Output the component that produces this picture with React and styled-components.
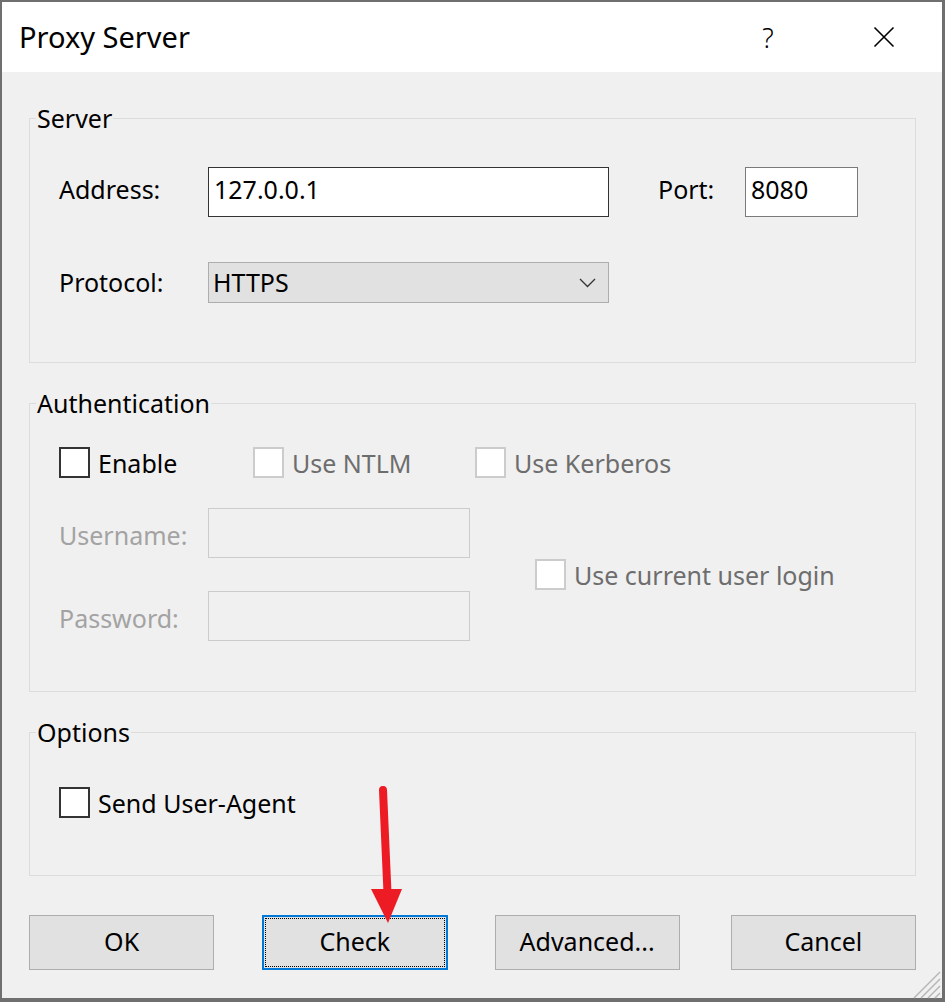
import React from "react";
import styled, { createGlobalStyle } from "styled-components";

const Global = createGlobalStyle`
  html, body { margin: 0; padding: 0; background: #6f6f6f; }
  body { font-family: "Noto Sans", "Open Sans", sans-serif; }
  * { box-sizing: border-box; }
`;

const Page = styled.div`
  position: relative;
  width: 945px;
  height: 1002px;
`;

const Window = styled.div`
  width: 945px;
  height: 1002px;
  border-style: solid;
  border-color: #6f6f6f;
  border-width: 2px 3px 4px 2px;
  background: #f0f0f0;
  display: flex;
  flex-direction: column;
  color: #000;
  font-size: 25px;
`;

const TitleBar = styled.div`
  height: 70px;
  background: #ffffff;
  display: flex;
  align-items: center;
  padding-left: 17px;
  flex-shrink: 0;
`;

const Title = styled.div`
  font-size: 29px;
  line-height: 1;
  padding-bottom: 2px;
  flex: 1;
`;

const TitleButton = styled.div`
  width: 116px;
  height: 70px;
  display: flex;
  align-items: center;
  justify-content: center;
  font-size: 27px;
  font-weight: 300;
`;

const Body = styled.div`
  padding: 33px 26px 0 27px;
  display: flex;
  flex-direction: column;
`;

const Group = styled.fieldset`
  margin: ${(p) => (p.$first ? "0" : "27px 0 0 0")};
  padding: 0;
  border: 1px solid #dcdcdc;
  min-width: 0;
`;

const Legend = styled.legend`
  margin-left: 6px;
  padding: 0 1px;
  font-size: 25px;
  line-height: 26px;
  color: #000;
`;

const GroupContent = styled.div`
  padding: ${(p) => p.$pad};
  display: flex;
  flex-direction: column;
`;

const Row = styled.div`
  display: flex;
  align-items: center;
  margin-top: ${(p) => p.$mt || 0}px;
`;

const Label = styled.div`
  width: ${(p) => p.$w}px;
  margin-left: ${(p) => p.$ml || 0}px;
  color: ${(p) => (p.$disabled ? "#a3a3a3" : "#000")};
  padding-bottom: ${(p) => (p.$raised ? 6 : 0)}px;
  padding-top: ${(p) => (p.$disabled ? 4 : 0)}px;
  line-height: 1;
  flex-shrink: 0;
`;

const TextBox = styled.div`
  width: ${(p) => p.$w}px;
  height: 50px;
  border: 1px solid ${(p) => p.$border || "#7a7a7a"};
  background: ${(p) => (p.$disabled ? "#f0f0f0" : "#ffffff")};
  padding: 0 5px 6px;
  display: flex;
  align-items: center;
  line-height: 1;
  flex-shrink: 0;
`;

const Select = styled.div`
  width: 401px;
  height: 41px;
  border: 1px solid #adadad;
  background: #e1e1e1;
  display: flex;
  align-items: center;
  padding: 0 12px 0 4px;
  justify-content: space-between;
  line-height: 1;
`;

const CheckItem = styled.label`
  display: flex;
  align-items: center;
  width: ${(p) => (p.$w ? `${p.$w}px` : "auto")};
  color: ${(p) => (p.$disabled ? "#6d6d6d" : "#000")};
  line-height: 1;
  flex-shrink: 0;
`;

const Box = styled.span`
  width: 31px;
  height: 31px;
  background: #fff;
  border: 2px solid ${(p) => (p.$disabled ? "#cccccc" : "#333333")};
  margin-right: 8px;
  flex-shrink: 0;
`;

const CheckText = styled.span`
  padding-top: 1px;
`;

const AuthGrid = styled.div`
  display: flex;
  align-items: center;
  margin-top: 30px;
`;

const FieldColumn = styled.div`
  display: flex;
  flex-direction: column;
  gap: 33px;
`;

const RightColumn = styled.div`
  margin-left: 65px;
`;

const ButtonRow = styled.div`
  display: flex;
  gap: 48px;
  margin-top: 39px;
`;

const Button = styled.button`
  width: 186px;
  height: 55px;
  font-family: inherit;
  font-size: 25px;
  color: #000;
  background: #e1e1e1;
  border: ${(p) => (p.$focused ? "2px solid #0078d7" : "1px solid #adadad")};
  outline: ${(p) => (p.$focused ? "1px dotted #000" : "none")};
  outline-offset: -4px;
  padding: 0 0 3px;
  margin: 0 0 0 ${(p) => p.$shift || 0}px;
  line-height: 1;
`;

const Overlay = styled.svg`
  position: absolute;
  left: 0;
  top: 0;
  pointer-events: none;
`;

function Checkbox({ label, disabled, w }) {
  return (
    <CheckItem $disabled={disabled} $w={w}>
      <Box $disabled={disabled} />
      <CheckText>{label}</CheckText>
    </CheckItem>
  );
}

export default function App() {
  return (
    <Page>
      <Global />
      <Window>
        <TitleBar>
          <Title>Proxy Server</Title>
          <TitleButton>?</TitleButton>
          <TitleButton>
            <svg width="22" height="22" viewBox="0 0 22 22">
              <path d="M1.5 1.5 L20.5 20.5 M20.5 1.5 L1.5 20.5" stroke="#000" strokeWidth="1.6" fill="none" />
            </svg>
          </TitleButton>
        </TitleBar>
        <Body>
          <Group $first>
            <Legend>Server</Legend>
            <GroupContent $pad="36px 0 59px 29px">
              <Row>
                <Label $w={149} $raised>Address:</Label>
                <TextBox $w={401} $border="#333333">127.0.0.1</TextBox>
                <Label $w={87} $ml={49} $raised>Port:</Label>
                <TextBox $w={113}>8080</TextBox>
              </Row>
              <Row $mt={45}>
                <Label $w={149}>Protocol:</Label>
                <Select>
                  <span>HTTPS</span>
                  <svg width="17" height="10" viewBox="0 0 17 10">
                    <path d="M1 1 L8.5 8.5 L16 1" stroke="#333" strokeWidth="1.3" fill="none" />
                  </svg>
                </Select>
              </Row>
            </GroupContent>
          </Group>

          <Group>
            <Legend>Authentication</Legend>
            <GroupContent $pad="31px 0 50px 29px">
              <Row>
                <Checkbox label="Enable" w={194} />
                <Checkbox label="Use NTLM" disabled w={222} />
                <Checkbox label="Use Kerberos" disabled />
              </Row>
              <AuthGrid>
                <FieldColumn>
                  <Row>
                    <Label $w={149} $disabled>Username:</Label>
                    <TextBox $w={262} $border="#cccccc" $disabled />
                  </Row>
                  <Row>
                    <Label $w={149} $disabled>Password:</Label>
                    <TextBox $w={262} $border="#cccccc" $disabled />
                  </Row>
                </FieldColumn>
                <RightColumn>
                  <Checkbox label="Use current user login" disabled />
                </RightColumn>
              </AuthGrid>
            </GroupContent>
          </Group>

          <Group>
            <Legend>Options</Legend>
            <GroupContent $pad="42px 0 57px 29px">
              <Row>
                <Checkbox label="Send User-Agent" />
              </Row>
            </GroupContent>
          </Group>

          <ButtonRow>
            <Button>OK</Button>
            <Button $focused>Check</Button>
            <Button $shift={-1}>Advanced...</Button>
            <Button $shift={3}>Cancel</Button>
          </ButtonRow>
        </Body>
      </Window>

      <Overlay width="945" height="1002" viewBox="0 0 945 1002">
        <g stroke="#b5b5b5" strokeWidth="1.5">
          <path d="M940 972 L914 998" />
          <path d="M940 979 L921 998" />
          <path d="M940 986 L928 998" />
          <path d="M940 993 L935 998" />
        </g>
        <path d="M383 790 L387.5 893" stroke="#ed1c24" strokeWidth="8" strokeLinecap="round" fill="none" />
        <path d="M371 889 L402 889 L388 923 Z" fill="#ed1c24" />
      </Overlay>
    </Page>
  );
}
